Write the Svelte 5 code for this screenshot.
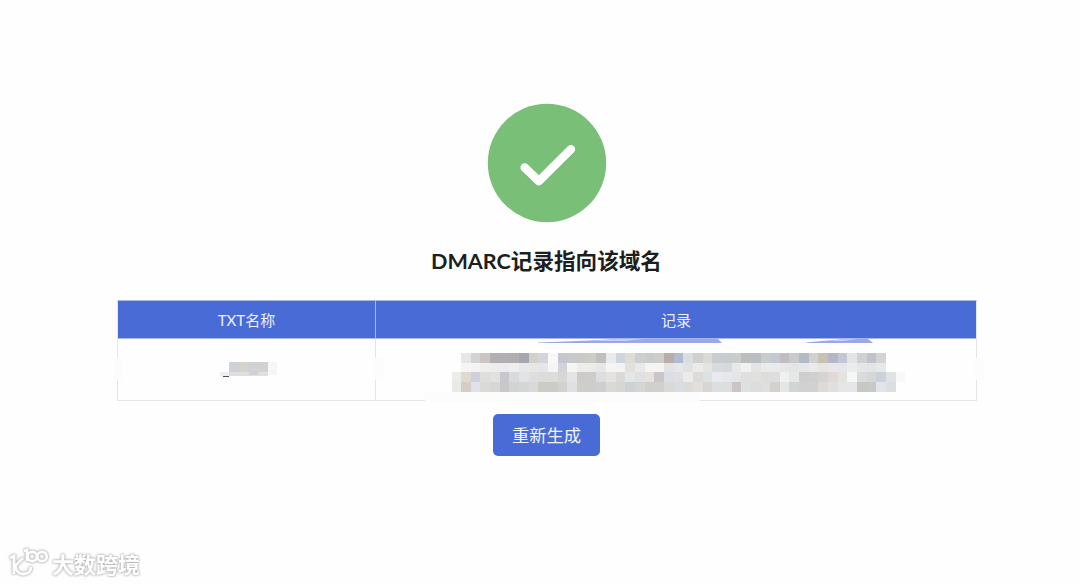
<script lang="ts">
  // one string per mosaic row, '-' leaves the cell empty
  const rows = [
    '- e6e6e5 d2d3d3 cbc4c0 b1afb1 b1afb1 b0aeb1 a5a7b3 d3d0cb d3d5db f8f8f8 c5c6ce c8c9ca c8c9c8 cccbc6 c1bfbd e8eaed ced5db dddcd8 cbcfcf c9cccb cccecd b9adaa b2bccf dadee0 d0d1cf d9dad6 c9cdcf c8cccf cbcdcd bcbebe b9bec1 c9cdca c5c9cf c2bec0 c8cacb b5bbc6 cfd0cf c9c1b0 b5b7c7 c3c7d2 e2e5e6 cdd1d1 c4c1ca d3d4d4 - -',
    '- f5f5f4 f3f3f4 f1eded eeecee ececed eeeeee e6e8eb e8e7e3 e5e6eb f5f5f5 d3d4db f7f4f2 eeedec ebebea e6e7e6 f5f5f4 f2f3f3 e1e0dc e8e9e9 f5f4f2 f6f4f2 e4e3e1 e5e7ea dfe3e4 edebe8 e4e4e1 d7dbdd d6dadd e7e8e8 f0f1f2 e3e4e4 e9eae9 e9eaeb e7e7e8 e4e5e6 e5e7e9 e9eaeb e7e5e2 e7e7e9 e5e6e9 ebeced e4e6e7 e1e5e6 e7e8e8 - -',
    'ebeceb dfd9d4 ced1db dededd e1e1e0 c7c8cd dadadc e1e3e4 dededf dddcda dcdcda d7d7d5 e3e4e4 cccbc9 cdccca dcdde0 e4e3e1 dad9d5 e4e6e7 dfe1e2 e5e2df cac5c9 dadfe4 e0dfdf ecebea dddbd9 dce1e4 e8eaed e6e8eb e4e5e7 dfdfdf e0e0df dedddc dddddd eff0f0 e6e7e7 cfcecd cfcfce d5d4d3 e0d9d5 e4e3e0 f5f6f6 dadbda d7d7d7 cbd1d8 e1e2e3 f8f8f8',
    'e8eae8 d6cec4 dfe2eb dadad8 d8d7d5 c7c8ca d2d3d4 d4d5d5 d8d9d8 cbccc6 cbccc7 d1d2d0 dee0e3 cecdca cfcdca cdcecd d9d9d8 d6d6d2 ccd2d4 d4d5d4 cfcfcc d2d0cc d8d9d9 d9dde1 dddbd9 e2dfdc d7d6d4 dbdfe1 dcdedf ccc4c4 dfe0e1 dcdddd dfdfdf d4d0ce e4e6e6 d1d4d5 cfd1d2 d2d1d0 dfdad7 e2e0de e5e6e6 e5e6e7 c7c8c4 c6c9c5 e1e4ea dcdee0 -',
  ].map((row) => row.split(' '));
</script>

<main class="page">
  <svg class="status" width="120" height="120" viewBox="0 0 120 120" aria-hidden="true">
    <circle cx="60" cy="60" r="59.2" fill="#7abf78" />
    <path d="M37.7 65.5L51.8 79L84.3 46.8" stroke="#559657" stroke-opacity=".4" />
    <path d="M37.7 64.6L51.8 78.2L84 46.3" stroke="#fff" />
  </svg>

  <h1>DMARC记录指向该域名</h1>

  <div class="table">
    <div class="head">TXT名称</div>
    <div class="head">记录</div>
    <div class="cell name">
      <svg width="57" height="17" viewBox="0 0 57 17" shape-rendering="crispEdges">
        <path fill="#eeeeef" d="M0 10h10v4H0z" />
        <path fill="#4c4e53" d="M3 14h6v1H3z" />
        <path fill="#cfd2d6" d="M9 0h10v10H9z" />
        <path fill="#d6d3cd" d="M19 0h9v10h-9z" />
        <path fill="#d1d2d4" d="M28 0h20v10H28z" />
        <path fill="#dfdfe1" d="M9 10h39v4H9z" />
        <path fill="#cfd1d3" d="M29 10h9v3h-9z" />
        <path fill="#f5f6f6" d="M48 0h9v13h-9z" />
      </svg>
      <span class="smudge left"></span>
      <span class="smudge mid"></span>
    </div>
    <div class="cell record">
      <svg class="streaks" width="336" height="5" viewBox="0 0 336 5">
        <path d="M0 3.5L52 1.5L80 0H180L184 4H0Z" fill="#98a8e8" />
        <path d="M52 2L80 0H105L88 2Z" fill="#c5cff5" />
        <path d="M268 3.5L290 1.5L308 0H330L335 4H268Z" fill="#98a8e8" />
        <path d="M288 2L308 0H318L306 2Z" fill="#c5cff5" />
      </svg>
      <div class="mosaic">
        {#each rows as row}
          <div class="mosaic-row">
            {#each row as color}
              <i style:background={color === '-' ? 'transparent' : '#' + color}></i>
            {/each}
          </div>
        {/each}
      </div>
      <span class="fade"></span>
      <span class="smudge right"></span>
    </div>
  </div>

  <button type="button">重新生成</button>

  <div class="watermark">
    <svg width="42" height="32" viewBox="0 0 42 32" fill="none">
      <path d="M3 10L7 8V26M16 10L8.5 17.5C8.5 23 12 26 16.5 26C21 26 24 23 24 19" />
      <path d="M17 3L20 2V13" />
      <circle cx="25.2" cy="8.5" r="4.7" />
      <circle cx="35" cy="8.5" r="4.7" />
    </svg>
    <span>大数跨境</span>
  </div>
</main>

<style>
  :global(body) { margin: 0; background: #fff; }

  .page {
    position: relative; box-sizing: border-box; width: 1080px; height: 584px; padding: 103px 0 0 117px;
    overflow: hidden; background: #fefefe; color: #1c1e20;
    font-family: Lato, 'Noto Sans CJK SC', sans-serif;
    display: flex; flex-direction: column; align-items: flex-start;
  }
  .status { display: block; margin-left: 370px; }
  .status path { fill: none; stroke-width: 8.6; stroke-linecap: round; stroke-linejoin: round; }

  h1 { width: 859px; margin: 22px 0 0; font-size: 21.6px; line-height: 32px; font-weight: 700; text-align: center; }

  .table {
    box-sizing: border-box; width: 860px; height: 101px; margin-top: 23px;
    display: grid; grid-template-columns: 258px 1fr; grid-template-rows: 38px 1fr;
    border: 1px solid #e4e5e8; border-top-color: #a9b7eb;
  }
  .head { display: flex; align-items: center; justify-content: center; background: #496bd5; color: #eef1fc; font-size: 15px; line-height: 22px; border-bottom: 1px solid #a9b7eb; box-sizing: border-box; }
  .head:first-child { border-right: 1px solid #a9b7eb; }
  .cell { position: relative; }
  .name { border-right: 1px solid #e4e5e8; }
  .name svg { display: block; margin: 23px 0 0 102px; }
  .streaks { position: absolute; left: 162px; top: 0; }

  .mosaic { padding: 14px 0 0 75.5px; }
  .mosaic-row { display: flex; height: 9.65px; }
  .mosaic-row i { flex: none; width: 9.66px; }

  /* pale patches that hide parts of the cell borders */
  .fade { position: absolute; left: 49px; bottom: -2px; width: 275px; height: 9px; background: #fcfcfc; }
  .smudge { position: absolute; top: 19px; width: 9px; height: 22px; background: #fbfcfc; }
  .left { left: -5px; }
  .mid { right: -9px; z-index: 1; }
  .right { right: -8px; }

  button {
    width: 107px; height: 42px; margin: 13px 0 0 376px; padding: 0; border: 0; border-radius: 5px;
    background: #496bd5; color: #f1f4ff; font: 17.3px/26px 'Noto Sans CJK SC', sans-serif;
  }

  .watermark {
    position: absolute; left: 7px; bottom: 4px; display: flex; align-items: center; gap: 3px;
    color: #fff; filter: drop-shadow(0 0 1px #aaa) drop-shadow(0 0 1px #ccc);
    font: 700 22px/32px 'Noto Sans CJK SC', sans-serif;
  }
  .watermark span { position: relative; top: -1px; }
  .watermark path, .watermark circle { stroke: #fff; stroke-width: 2.8; }
</style>
